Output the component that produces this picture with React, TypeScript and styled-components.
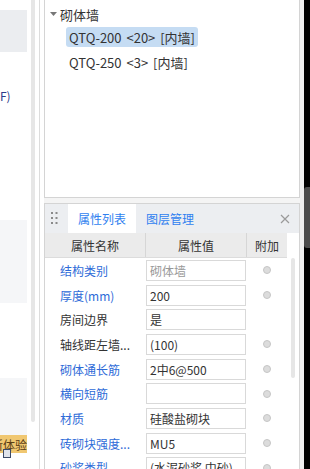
import React from "react";
import styled, { createGlobalStyle } from "styled-components";

const GlobalStyle = createGlobalStyle`
  html, body {
    margin: 0;
    padding: 0;
    background: #fff;
  }
  body {
    font-family: "Noto Sans CJK SC", "Noto Sans", sans-serif;
    font-size: 12px;
    color: #333;
  }
`;

type PropRow = {
  name: string;
  value: string;
  blue?: boolean;
  disabled?: boolean;
  extra?: boolean;
};

const rows: PropRow[] = [
  { name: "结构类别", value: "砌体墙", blue: true, disabled: true, extra: true },
  { name: "厚度(mm)", value: "200", blue: true, extra: true },
  { name: "房间边界", value: "是" },
  { name: "轴线距左墙...", value: "(100)", extra: true },
  { name: "砌体通长筋", value: "2中6@500", blue: true, extra: true },
  { name: "横向短筋", value: "", blue: true, extra: true },
  { name: "材质", value: "硅酸盐砌块", blue: true, extra: true },
  { name: "砖砌块强度...", value: "MU5", blue: true, extra: true },
  { name: "砂浆类型", value: "(水泥砂浆 中砂)", blue: true, extra: true },
];

const App = () => {
  return (
    <Screen>
      <GlobalStyle />
      <Side>
        <SideContent>
          <SideBlock h={42} top={10} tone="#ebedf0" />
          <SideText>F)</SideText>
          <SideBlock h={83} top={116} tone="#f5f6f8" />
          <SideBlock h={57} top={75} tone="#f5f6f8" />
          <Promo>
            全新体验
            <PromoIcon />
          </Promo>
        </SideContent>
        <SideScroll>
          <SideThumb />
        </SideScroll>
      </Side>
      <Divider />
      <Main>
        <TreePanel>
          <GroupRow>
            <svg width="7" height="4" viewBox="0 0 7 4">
              <path d="M0 0h7L3.5 4z" fill="#777" />
            </svg>
            <span>砌体墙</span>
          </GroupRow>
          <TreeItem selected>QTQ-200 &lt;20&gt; [内墙]</TreeItem>
          <TreeItem>QTQ-250 &lt;3&gt; [内墙]</TreeItem>
        </TreePanel>
        <PropPanel>
          <TabBar>
            <Grip>
              <svg width="7" height="13" viewBox="0 0 7 13">
                {[0, 5, 10].map((y) =>
                  [0, 4.5].map((x) => (
                    <rect key={`${x}-${y}`} x={x} y={y} width="2" height="2" fill="#8a8a8a" />
                  ))
                )}
              </svg>
            </Grip>
            <Tab active>属性列表</Tab>
            <Tab>图层管理</Tab>
            <Close>
              <svg width="10" height="10" viewBox="0 0 10 10">
                <path d="M1 1l8 8M9 1l-8 8" stroke="#9a9a9a" strokeWidth="1.2" />
              </svg>
            </Close>
          </TabBar>
          <TableWrap>
            <Table>
              <HeadRow>
                <HeadCell>属性名称</HeadCell>
                <HeadCell>属性值</HeadCell>
                <HeadCell last>附加</HeadCell>
              </HeadRow>
              {rows.map((r) => (
                <BodyRow key={r.name}>
                  <NameCell blue={r.blue}>{r.name}</NameCell>
                  <ValueCell>
                    <ValueBox disabled={r.disabled}>{r.value}</ValueBox>
                  </ValueCell>
                  <ExtraCell>{r.extra && <Dot />}</ExtraCell>
                </BodyRow>
              ))}
            </Table>
            <TableScroll>
              <TableThumb />
            </TableScroll>
          </TableWrap>
        </PropPanel>
      </Main>
      <Edge>
        <EdgeGap />
        <EdgeDark>
          <EdgeTab />
        </EdgeDark>
      </Edge>
    </Screen>
  );
};

const Screen = styled.div`
  display: flex;
  width: 310px;
  height: 469px;
  overflow: hidden;
  background: #fff;
`;

const Side = styled.div`
  display: flex;
  width: 39px;
  flex-shrink: 0;
`;

const SideContent = styled.div`
  display: flex;
  flex-direction: column;
  width: 27px;
  overflow: hidden;
`;

const SideBlock = styled.div<{ h: number; top: number; tone: string }>`
  height: ${(p) => p.h}px;
  margin-top: ${(p) => p.top}px;
  background: ${(p) => p.tone};
  flex-shrink: 0;
`;

const SideText = styled.div`
  margin-top: 36px;
  height: 16px;
  line-height: 16px;
  font-size: 12px;
  color: #2b3a8a;
  white-space: nowrap;
`;

const Promo = styled.div`
  position: relative;
  display: flex;
  justify-content: flex-end;
  align-items: center;
  height: 18px;
  background: #f0c771;
  color: #5a3d14;
  font-size: 12px;
  white-space: nowrap;
  flex-shrink: 0;
`;

const PromoIcon = styled.span`
  position: absolute;
  left: 3px;
  top: 14px;
  width: 6px;
  height: 7px;
  border: 1px solid #3c4a66;
  background: #dfe3ea;
`;

const SideScroll = styled.div`
  padding: 0 4px;
`;

const SideThumb = styled.div`
  width: 4px;
  height: 422px;
  background: #e6e6e6;
  border-radius: 0 0 2px 2px;
`;

const Divider = styled.div`
  width: 1px;
  margin-right: 4px;
  background: #dcdcdc;
  flex-shrink: 0;
`;

const Main = styled.div`
  display: flex;
  flex-direction: column;
  width: 256px;
  flex-shrink: 0;
  background: #f4f4f4;
`;

const TreePanel = styled.div`
  height: 197px;
  flex-shrink: 0;
  background: #fff;
  border: 1px solid #d4d4d4;
  border-top: none;
  font-size: 13px;
  color: #333;
`;

const GroupRow = styled.div`
  display: flex;
  align-items: center;
  gap: 3px;
  height: 20px;
  margin-top: 4px;
  padding-left: 5px;
`;

const TreeItem = styled.div<{ selected?: boolean }>`
  display: flex;
  align-items: center;
  width: fit-content;
  height: 20px;
  margin: 3px 0 5px 21px;
  padding: 0 3px;
  border-radius: 3px;
  background: ${(p) => (p.selected ? "#c5dcf3" : "transparent")};
  white-space: pre;
  word-spacing: 2px;
`;

const PropPanel = styled.div`
  flex: 1;
  margin-top: 5px;
  display: flex;
  flex-direction: column;
  background: #fff;
  border: 1px solid #d4d4d4;
  border-bottom: none;
  overflow: hidden;
`;

const TabBar = styled.div`
  display: flex;
  align-items: stretch;
  height: 29px;
  flex-shrink: 0;
  background: #eceef1;
`;

const Grip = styled.div`
  display: flex;
  align-items: center;
  padding-left: 6px;
  width: 17px;
`;

const Tab = styled.div<{ active?: boolean }>`
  display: flex;
  align-items: center;
  padding: 0 10px;
  background: ${(p) => (p.active ? "#fff" : "transparent")};
  color: #2f7ff0;
  font-size: 12px;
`;

const Close = styled.div`
  display: flex;
  align-items: center;
  margin-left: auto;
  padding-right: 9px;
`;

const TableWrap = styled.div`
  display: flex;
  flex: 1;
`;

const Table = styled.div`
  width: 242px;
  display: flex;
  flex-direction: column;
`;

const grid = `
  display: grid;
  grid-template-columns: 101px 101px 40px;
`;

const HeadRow = styled.div`
  ${grid}
  height: 24px;
  background: #ebebeb;
  border-bottom: 1px solid #dcdcdc;
`;

const HeadCell = styled.div<{ last?: boolean }>`
  display: flex;
  align-items: center;
  justify-content: center;
  border-right: ${(p) => (p.last ? "none" : "1px solid #d6d6d6")};
  color: #333;
`;

const BodyRow = styled.div`
  ${grid}
  height: 24.7px;
  flex-shrink: 0;
`;

const NameCell = styled.div<{ blue?: boolean }>`
  display: flex;
  align-items: center;
  padding-left: 15px;
  color: ${(p) => (p.blue ? "#2e6bd8" : "#333")};
  white-space: nowrap;
`;

const ValueCell = styled.div`
  display: flex;
  align-items: center;
`;

const ValueBox = styled.div<{ disabled?: boolean }>`
  box-sizing: border-box;
  width: 100px;
  height: 21px;
  padding-left: 3px;
  line-height: 19px;
  border: 1px solid #d9d9d9;
  color: ${(p) => (p.disabled ? "#999" : "#333")};
  white-space: nowrap;
  overflow: hidden;
`;

const ExtraCell = styled.div`
  display: flex;
  align-items: center;
  justify-content: center;
`;

const Dot = styled.span`
  box-sizing: border-box;
  width: 8px;
  height: 8px;
  border-radius: 50%;
  background: #dcdcdc;
  border: 1px solid #c6c6c6;
`;

const TableScroll = styled.div`
  padding: 25px 0 0 4px;
`;

const TableThumb = styled.div`
  width: 4px;
  height: 120px;
  border-radius: 2px;
  background: #e6e6e6;
`;

const Edge = styled.div`
  display: flex;
  width: 10px;
  flex-shrink: 0;
`;

const EdgeGap = styled.div`
  width: 4px;
  background: #efefef;
`;

const EdgeDark = styled.div`
  position: relative;
  flex: 1;
  background: #000;
`;

const EdgeTab = styled.div`
  position: absolute;
  left: 0;
  top: 187px;
  width: 6px;
  height: 61px;
  background: #4c4c4c;
  border-radius: 3px 0 0 3px;
`;

export default App;
